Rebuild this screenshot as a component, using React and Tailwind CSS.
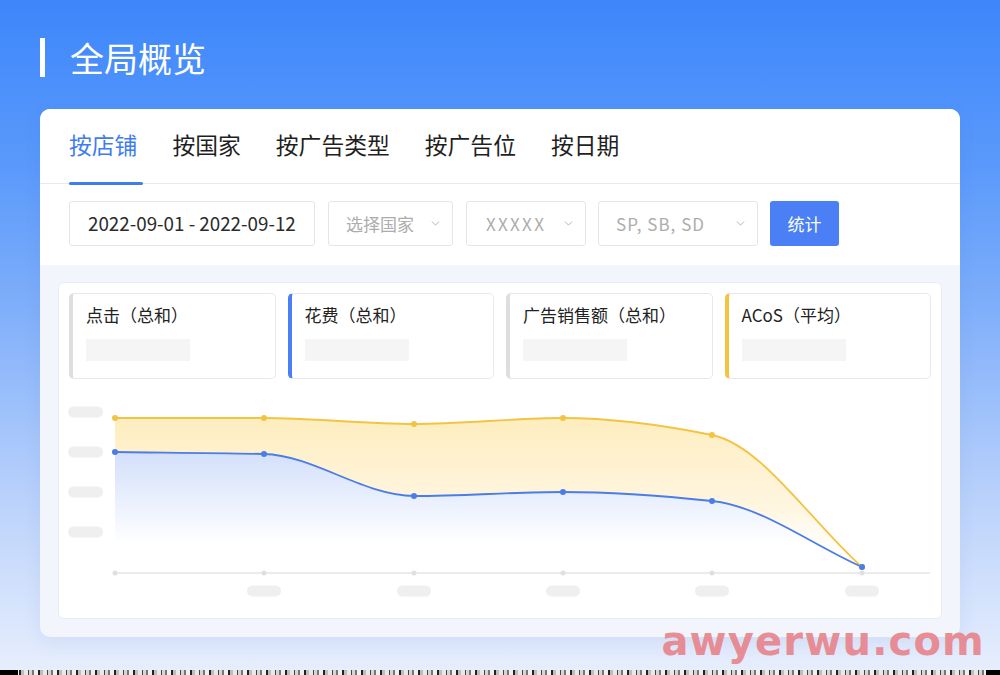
import React from "react";
import { ChevronDown } from "lucide-react";

const XS = [115, 264, 414, 563, 712, 862];
const YELLOW = [419, 419, 425, 419, 436, 568];
const BLUE = [453, 455, 497, 493, 502, 568];

function monotone(xs, ys) {
  const n = xs.length;
  const dx = [], m = [], t = [];
  for (let i = 0; i < n - 1; i++) {
    dx[i] = xs[i + 1] - xs[i];
    m[i] = (ys[i + 1] - ys[i]) / dx[i];
  }
  t[0] = m[0];
  t[n - 1] = m[n - 2];
  for (let i = 1; i < n - 1; i++) {
    if (m[i - 1] * m[i] <= 0) t[i] = 0;
    else
      t[i] =
        (3 * (dx[i - 1] + dx[i])) /
        ((2 * dx[i] + dx[i - 1]) / m[i - 1] + (dx[i] + 2 * dx[i - 1]) / m[i]);
  }
  let d = `M${xs[0]} ${ys[0]}`;
  for (let i = 0; i < n - 1; i++) {
    const h = dx[i] / 3;
    d += ` C${xs[i] + h} ${ys[i] + t[i] * h} ${xs[i + 1] - h} ${ys[i + 1] - t[i + 1] * h} ${xs[i + 1]} ${ys[i + 1]}`;
  }
  return d;
}

function Chart() {
  const yl = monotone(XS, YELLOW);
  const bl = monotone(XS, BLUE);
  return (
    <svg width="884" height="225" viewBox="58 389 884 225" className="block">
      <defs>
        <linearGradient id="gy" x1="0" y1="419" x2="0" y2="574" gradientUnits="userSpaceOnUse">
          <stop offset="0" stopColor="#fdecbb" stopOpacity="0.95" />
          <stop offset="0.6" stopColor="#fff4da" stopOpacity="0.8" />
          <stop offset="1" stopColor="#ffffff" stopOpacity="0" />
        </linearGradient>
        <linearGradient id="gb" x1="0" y1="453" x2="0" y2="545" gradientUnits="userSpaceOnUse">
          <stop offset="0" stopColor="#d3e0fa" />
          <stop offset="0.6" stopColor="#edf2fd" />
          <stop offset="1" stopColor="#ffffff" />
        </linearGradient>
      </defs>
      {[413, 453, 493, 533].map((y) => (
        <rect key={y} x="68" y={y - 5.5} width="35" height="11" rx="5.5" fill="#efefef" />
      ))}
      <path d={`${yl} L862 574 L115 574 Z`} fill="url(#gy)" />
      <path d={`${bl} L862 574 L115 574 Z`} fill="url(#gb)" />
      <line x1="115" y1="574" x2="930" y2="574" stroke="#e4e4e4" strokeWidth="1.5" />
      {XS.map((x) => (
        <circle key={x} cx={x} cy="574" r="2.5" fill="#e0e0e0" />
      ))}
      {XS.slice(1).map((x) => (
        <rect key={x} x={x - 17} y="586.5" width="34" height="11" rx="5.5" fill="#efefef" />
      ))}
      <path d={yl} fill="none" stroke="#f3c443" strokeWidth="1.8" />
      <path d={bl} fill="none" stroke="#4c7ce6" strokeWidth="1.8" />
      {XS.map((x, i) => (
        <circle key={"y" + x} cx={x} cy={YELLOW[i]} r="3" fill="#f3c443" />
      ))}
      {XS.map((x, i) => (
        <circle key={"b" + x} cx={x} cy={BLUE[i]} r="3" fill="#4c7ce6" />
      ))}
    </svg>
  );
}

function Select({ cls, text, textCls = "", pl = "pl-[17px]" }) {
  return (
    <div
      className={`h-[45px] ${cls} ${pl} pr-[10px] flex items-center justify-between rounded-[3px] border border-[#e6e6e6] bg-white`}
    >
      <span className={`text-[17px] text-[#adadad] ${textCls}`}>{text}</span>
      <ChevronDown size={13} strokeWidth={1.6} color="#a8a8a8" />
    </div>
  );
}

function StatCard({ title, bar }) {
  return (
    <div
      className={`h-[86px] rounded-[5px] border border-[#e6e8ec] border-l-[4px] ${bar} bg-white pl-[13px] pt-[9px]`}
    >
      <div className="text-[17px] leading-[24px] text-[#222]">{title}</div>
      <div className="mt-[12px] h-[22px] w-[104px] bg-[#f5f5f6]" />
    </div>
  );
}

export default function App() {
  const tabs = ["按店铺", "按国家", "按广告类型", "按广告位", "按日期"];
  return (
    <div
      className="relative w-[1000px] h-[675px] overflow-hidden bg-[linear-gradient(180deg,#3d86fb_0%,#5b9afb_25%,#7eaefa_45%,#bcd3fb_75%,#e8effd_100%)]"
      style={{ fontFamily: '"Noto Sans CJK SC", "Noto Sans", sans-serif' }}
    >
      <div className="px-[40px] pt-[38px]">
        <div className="flex items-center h-[39px]">
          <div className="w-[5px] h-[39px] bg-white" />
          <div className="ml-[25px] text-[34px] leading-[39px] text-white">全局概览</div>
        </div>

        <div className="mt-[32px] h-[528px] rounded-[10px] overflow-hidden bg-[#f2f5fb] shadow-[0_6px_18px_rgba(60,90,160,0.08)] flex flex-col">
          <div className="bg-white">
            <div className="h-[75px] border-b border-[#e9e9e9] px-[29px] flex items-center gap-[35px]">
              {tabs.map((t, i) => (
                <div
                  key={t}
                  className={`relative h-full flex items-center pb-[2px] text-[22.8px] ${
                    i === 0 ? "text-[#3f7cf0]" : "text-[#1f1f1f]"
                  }`}
                >
                  {t}
                  {i === 0 && (
                    <div className="absolute left-0 bottom-[-2px] w-[74px] h-[3px] rounded-full bg-[#3f7cf0]" />
                  )}
                </div>
              ))}
            </div>
            <div className="h-[81px] px-[29px] pt-[17px] flex">
              <div className="h-[45px] w-[246px] pl-[18px] flex items-center rounded-[3px] border border-[#e6e6e6] text-[18.8px] text-[#2b2b2b]">
                2022-09-01 - 2022-09-12
              </div>
              <Select cls="ml-[13px] w-[125px]" text="选择国家" />
              <Select cls="ml-[13px] w-[120px]" text="XXXXX" textCls="tracking-[2.3px]" pl="pl-[19px]" />
              <Select cls="ml-[12px] w-[160px]" text="SP, SB, SD" textCls="tracking-[1px]" />
              <div className="ml-[12px] h-[45px] w-[69px] flex items-center justify-center rounded-[3px] bg-[#4a7ff6] text-white text-[17px]">
                统计
              </div>
            </div>
          </div>

          <div className="flex-1 px-[18px] pt-[17px] pb-[18px]">
            <div className="h-full rounded-[6px] border border-[#e8ecf2] bg-white px-[10px] pt-[10px]">
              <div className="grid grid-cols-4 gap-[12px]">
                <StatCard title="点击（总和）" bar="border-l-[#dedede]" />
                <StatCard title="花费（总和）" bar="border-l-[#4a7ff6]" />
                <StatCard title="广告销售额（总和）" bar="border-l-[#dedede]" />
                <StatCard title="ACoS（平均）" bar="border-l-[#f5c33f]" />
              </div>
              <div className="-ml-[11px] mt-[9px]">
                <Chart />
              </div>
            </div>
          </div>
        </div>
      </div>

      <div
        className="absolute right-[15px] top-[618px] text-[40px] leading-[46px] font-bold tracking-[1.2px] text-[#e8838a] opacity-90"
        style={{ fontFamily: '"DejaVu Sans", sans-serif' }}
      >
        awyerwu.com
      </div>

      <div className="absolute left-0 bottom-0 w-full h-[5px] bg-[repeating-linear-gradient(90deg,#222_0px,#222_2px,#bdbdbd_2px,#bdbdbd_5px,#e8e8e8_5px,#e8e8e8_9px,#444_9px,#444_10px,#d5d5d5_10px,#d5d5d5_13px,#777_13px,#777_15px,#f0f0f0_15px,#f0f0f0_19px)]" />
      <div className="absolute left-0 bottom-0 w-[18px] h-[5px] bg-black" />
      <div className="absolute right-0 bottom-0 w-[14px] h-[5px] bg-black" />
    </div>
  );
}
